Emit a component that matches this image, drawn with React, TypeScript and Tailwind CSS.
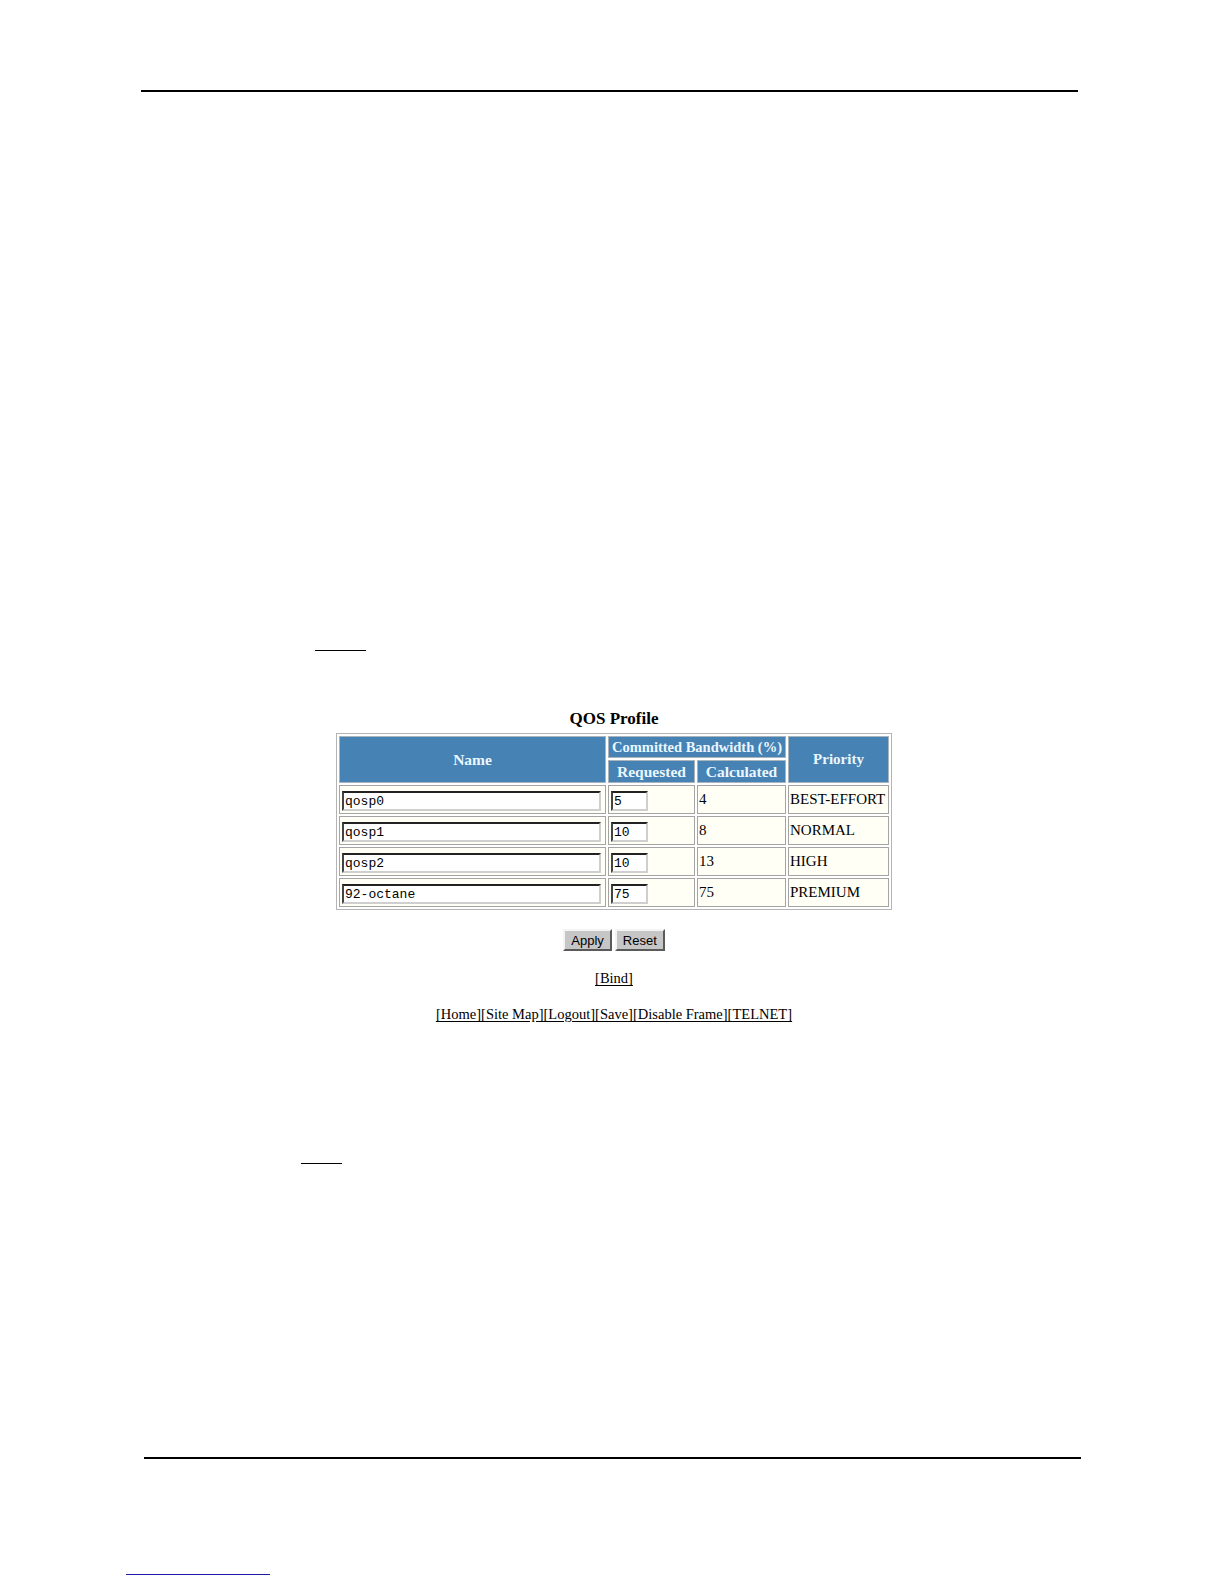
import React from "react";

const rows = [
  { name: "qosp0", req: "5", calc: "4", prio: "BEST-EFFORT" },
  { name: "qosp1", req: "10", calc: "8", prio: "NORMAL" },
  { name: "qosp2", req: "10", calc: "13", prio: "HIGH" },
  { name: "92-octane", req: "75", calc: "75", prio: "PREMIUM" },
];

const links = ["Home", "Site Map", "Logout", "Save", "Disable Frame", "TELNET"];

const headCell =
  "bg-[#4682b4] border border-[#a9b4bd] text-[#eaf7ff] font-bold leading-none text-center p-0 whitespace-nowrap";
const dataCell = "bg-[#fffff6] border border-[#a4a4a4] p-0 align-middle";
const inputBox =
  "h-[20px] border-2 border-t-[#222] border-l-[#444] border-r-[#cfcfcf] border-b-[#cfcfcf] bg-white font-['Liberation_Mono',monospace] text-[13px] text-black pl-[1px] outline-none";
const btn =
  "h-[22px] px-[6px] bg-[#c6c6c6] border-2 border-t-[#f4f4f4] border-l-[#f4f4f4] border-r-[#5a5a5a] border-b-[#5a5a5a] font-['Liberation_Sans',Arial,sans-serif] text-[13px] text-black leading-none";

const QosTable = () => {
  return (
    <table className="border border-[#b4b4b4] border-separate border-spacing-[2px] font-['Liberation_Serif',serif]">
      <thead>
        <tr>
          <th rowSpan={2} className={`${headCell} text-[15.5px] w-[267px]`}>
            Name
          </th>
          <th colSpan={2} className={`${headCell} text-[14.5px] font-semibold h-[22px]`}>
            Committed Bandwidth (%)
          </th>
          <th rowSpan={2} className={`${headCell} text-[15px] w-[101px]`}>
            Priority
          </th>
        </tr>
        <tr>
          <th className={`${headCell} text-[15.5px] w-[87px] h-[23px]`}>Requested</th>
          <th className={`${headCell} text-[15.5px] w-[89px] h-[23px]`}>Calculated</th>
        </tr>
      </thead>
      <tbody>
        {rows.map((r) => (
          <tr key={r.name}>
            <td className={`${dataCell} h-[29px] pl-[2px]`}>
              <input readOnly value={r.name} className={`${inputBox} w-[259px]`} />
            </td>
            <td className={`${dataCell} pl-[2px]`}>
              <input readOnly value={r.req} className={`${inputBox} w-[37px]`} />
            </td>
            <td className={`${dataCell} text-[15px] text-black pl-[1px]`}>{r.calc}</td>
            <td className={`${dataCell} text-[15px] text-black pl-[1px] whitespace-nowrap`}>{r.prio}</td>
          </tr>
        ))}
      </tbody>
    </table>
  );
};

export default function App() {
  return (
    <div className="w-[1224px] h-[1584px] bg-white pt-[90px] font-['Liberation_Serif',serif] text-black">
      <div className="ml-[141px] w-[937px] h-[2px] bg-black" />

      <div className="mt-[558px] ml-[315px] w-[51px] h-px bg-black" />

      <div className="flex flex-col items-center pl-[4px]">
        <h2 className="mt-[58px] h-[20px] text-[17px] leading-[20px] font-bold">QOS Profile</h2>
        <div className="mt-[4px]">
          <QosTable />
        </div>
        <div className="mt-[19px] flex gap-[3px]">
          <button className={btn}>Apply</button>
          <button className={btn}>Reset</button>
        </div>
        <a className="mt-[18px] h-[18px] text-[14.5px] leading-[18px] underline underline-offset-2">
          [Bind]
        </a>
        <div className="mt-[18px] h-[18px] text-[14.5px] leading-[18px] underline underline-offset-2 whitespace-nowrap">
          {links.map((l) => (
            <a key={l}>[{l}]</a>
          ))}
        </div>
      </div>

      <div className="mt-[140px] ml-[301px] w-[41px] h-px bg-black" />

      <div className="mt-[293px] ml-[144px] w-[937px] h-[2px] bg-black" />

      <div className="mt-[115px] ml-[126px] w-[144px] h-px bg-[#1c1ca8]" />
    </div>
  );
}
